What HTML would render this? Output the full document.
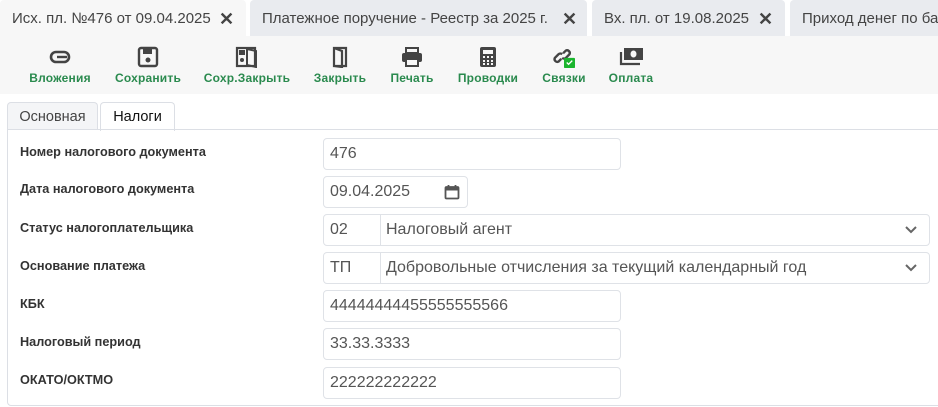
<!DOCTYPE html>
<html><head><meta charset="utf-8"><style>
*{box-sizing:border-box;margin:0;padding:0}
body{width:938px;height:407px;overflow:hidden;background:#fff;font-family:"Liberation Sans","Noto Sans CJK SC",sans-serif;position:relative}
.tab{position:absolute;top:0;height:36px;background:#e9ebef;border-radius:4px 4px 0 0;font-size:15px;color:#444;line-height:38px;padding-left:12px;white-space:nowrap;overflow:hidden}
.tab.a{background:#f7f7f7}
.x{position:absolute;top:0;font-size:18px;font-weight:bold;color:#444}
.tb{position:absolute;top:36px;left:0;width:938px;height:58px;background:#f7f7f7}
.btn{position:absolute;top:0;text-align:center;width:100px;margin-left:-50px}
.btn svg{display:block;margin:10px auto 0;height:22px}
.btn span{display:block;font-size:12px;font-weight:bold;color:#2a8a4e;margin-top:3px;letter-spacing:0.2px}
.it{position:absolute;top:102px;height:28px;border:1px solid #dcdfe5;border-bottom:none;border-radius:4px 4px 0 0;font-size:14.5px;line-height:28px;text-align:center;background:#f4f5f7;color:#333}
.panel{position:absolute;left:7px;top:129px;width:940px;height:277px;border:1px solid #dcdfe5;border-radius:0 0 0 4px}
.lb{position:absolute;left:20px;font-size:12.7px;font-weight:bold;color:#333}
.in{position:absolute;left:323px;height:32px;border:1px solid #dfe2e7;border-radius:4px;font-size:16px;color:#555;line-height:30px;padding-left:6px;background:#fff;white-space:nowrap}
.sep{position:absolute;left:56px;top:0;bottom:0;border-left:1px solid #dfe2e7}
</style></head><body>
<div class="tab a" style="left:0;width:246px">Исх. пл. №476 от 09.04.2025<span class="x" style="left:219px">✕</span></div>
<div class="tab" style="left:250px;width:337px">Платежное поручение - Реестр за 2025 г.<span class="x" style="left:312px">✕</span></div>
<div class="tab" style="left:592px;width:193px">Вх. пл. от 19.08.2025<span class="x" style="left:166px">✕</span></div>
<div class="tab" style="left:790px;width:160px">Приход денег по ба</div>
<div class="tb">
<div class="btn" style="left:60px"><svg width="24" viewBox="0 0 24 22"><rect x="3" y="6" width="18" height="10" rx="5" fill="none" stroke="#444" stroke-width="2.6"/><path d="M9 11h10" stroke="#444" stroke-width="2.4"/></svg><span>Вложения</span></div>
<div class="btn" style="left:148px"><svg width="22" viewBox="0 0 22 22"><rect x="2" y="2" width="18" height="18" rx="2" fill="none" stroke="#444" stroke-width="2.4"/><rect x="6" y="3" width="9" height="5" fill="#444"/><circle cx="11" cy="14" r="2.5" fill="#444"/></svg><span>Сохранить</span></div>
<div class="btn" style="left:247px"><svg width="24" viewBox="0 0 24 22"><rect x="2" y="2" width="18" height="18" fill="none" stroke="#444" stroke-width="2.2"/><path d="M12 2v18M12 3l9 2v16l-9-2" fill="none" stroke="#444" stroke-width="2"/><rect x="4" y="4" width="6" height="5" fill="#444"/><circle cx="7" cy="14" r="2" fill="#444"/></svg><span>Сохр.Закрыть</span></div>
<div class="btn" style="left:340px"><svg width="18" viewBox="0 0 18 22"><path d="M3 2h12v18H3zM3 2l8 3v16l-8-1" fill="none" stroke="#444" stroke-width="2.2"/></svg><span>Закрыть</span></div>
<div class="btn" style="left:412px"><svg width="24" viewBox="0 0 24 22"><rect x="6" y="2" width="12" height="5" fill="none" stroke="#444" stroke-width="2"/><rect x="2" y="7" width="20" height="9" rx="2" fill="#444"/><rect x="6" y="13" width="12" height="7" fill="#f7f7f7" stroke="#444" stroke-width="2"/></svg><span>Печать</span></div>
<div class="btn" style="left:488px"><svg width="18" viewBox="0 0 18 22"><rect x="1" y="1" width="16" height="20" rx="2" fill="#444"/><rect x="4" y="4" width="10" height="4" fill="#f7f7f7"/><g fill="#f7f7f7"><rect x="4" y="10" width="2" height="2"/><rect x="8" y="10" width="2" height="2"/><rect x="12" y="10" width="2" height="2"/><rect x="4" y="14" width="2" height="2"/><rect x="8" y="14" width="2" height="2"/><rect x="12" y="14" width="2" height="2"/><rect x="4" y="17" width="2" height="2"/><rect x="8" y="17" width="2" height="2"/><rect x="12" y="17" width="2" height="2"/></g></svg><span>Проводки</span></div>
<div class="btn" style="left:564px"><svg width="26" viewBox="0 0 26 24"><path d="M10 14l-3 3a3 3 0 0 1-4-4l4-4a3 3 0 0 1 4 0M12 8l3-3a3 3 0 0 1 4 4l-4 4a3 3 0 0 1-4 0" fill="none" stroke="#444" stroke-width="2.6"/><rect x="13" y="13" width="12" height="11" rx="1" fill="#1bb52e"/><path d="M16 18l2 2 4-4" fill="none" stroke="#fff" stroke-width="1.5"/></svg><span>Связки</span></div>
<div class="btn" style="left:631px"><svg width="26" viewBox="0 0 26 22"><rect x="6" y="2" width="19" height="12" fill="#444"/><ellipse cx="15.5" cy="8" rx="3" ry="3.5" fill="#f7f7f7"/><path d="M3 6v12h19" fill="none" stroke="#444" stroke-width="2.2"/></svg><span>Оплата</span></div>
</div>
<div class="it" style="left:7px;width:91px;color:#444">Основная</div>
<div class="it" style="left:100px;width:75px;background:#fff;height:29px;color:#111">Налоги</div>
<div class="panel"></div>
<div class="lb" style="top:145px">Номер налогового документа</div>
<div class="in" style="top:138px;width:298px">476</div>
<div class="lb" style="top:182px">Дата налогового документа</div>
<div class="in" style="top:176px;width:145px">09.04.2025<svg style="position:absolute;left:120px;top:7px" width="16" height="16" viewBox="0 0 16 16"><rect x="1.5" y="3" width="13" height="11.5" rx="1" fill="none" stroke="#555" stroke-width="1.8"/><rect x="1.5" y="3" width="13" height="3.5" fill="#555"/><path d="M4.5 1v3M11.5 1v3" stroke="#555" stroke-width="1.8"/></svg></div>
<div class="lb" style="top:221px">Статус налогоплательщика</div>
<div class="in" style="top:214px;width:607px">02<div class="sep"></div><span style="position:absolute;left:62px">Налоговый агент</span></div>
<div class="lb" style="top:259px">Основание платежа</div>
<div class="in" style="top:252px;width:607px">ТП<div class="sep"></div><span style="position:absolute;left:62px">Добровольные отчисления за текущий календарный год</span></div>
<div class="lb" style="top:297px">КБК</div>
<div class="in" style="top:290px;width:298px">44444444455555555566</div>
<div class="lb" style="top:335px">Налоговый период</div>
<div class="in" style="top:328px;width:298px">33.33.3333</div>
<div class="lb" style="top:373px">ОКАТО/ОКТМО</div>
<div class="in" style="top:367px;width:298px">222222222222</div>
<svg style="position:absolute;left:905px;top:225px" width="12" height="10" viewBox="0 0 12 10"><path d="M1 2l5 5 5-5" fill="none" stroke="#666" stroke-width="2"/></svg>
<svg style="position:absolute;left:905px;top:263px" width="12" height="10" viewBox="0 0 12 10"><path d="M1 2l5 5 5-5" fill="none" stroke="#666" stroke-width="2"/></svg>
</body></html>
